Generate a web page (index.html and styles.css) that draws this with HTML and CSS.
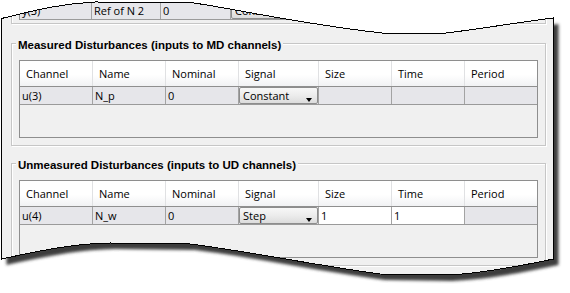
FILE: index.html
```html
<!DOCTYPE html>
<html lang="en">
<head>
    <meta charset="UTF-8">
    <meta name="viewport" content="width=device-width, initial-scale=1.0">
    <title>Disturbances</title>
    <link rel="stylesheet" href="styles.css">
</head>
<body>
    <div class="page">
        <svg class="shadow" width="570" height="293" viewBox="0 0 570 293">
            <defs>
                <filter id="soft" x="-5%" y="-5%" width="110%" height="110%">
                    <feGaussianBlur stdDeviation="1.6"/>
                </filter>
            </defs>
            <path transform="translate(5 6)" fill="#3c3c3c" filter="url(#soft)"
                  d="M1.5,18.5 C25,13 55,4 95,2 L190,2.5 C220,6 300,24 382,33 L446,33 C480,29 520,22 553.5,18 L553.5,259 C520,266 480,274 447,275 L380,274 C320,266 240,250 190,244 L110,243 C70,243.5 30,253 1.5,259 Z"/>
        </svg>

        <div class="sheet">
            <!-- tail of the reference signals table, cut by the tear -->
            <div class="group group-top">
                <div class="grid grid-top">
                    <div class="grid-row">
                        <div class="cell">y(3)</div>
                        <div class="cell">Ref of N 2</div>
                        <div class="cell">0</div>
                        <div class="cell combo-cell"><div class="combo"><span>Constant</span><span class="arrow"></span></div></div>
                        <div class="cell"></div>
                        <div class="cell"></div>
                        <div class="cell"></div>
                    </div>
                </div>
            </div>

            <div class="group group-md">
                <div class="group-title">Measured Disturbances (inputs to MD channels)</div>
                <div class="grid">
                    <div class="grid-head">
                        <div class="head-cell">Channel</div>
                        <div class="head-cell">Name</div>
                        <div class="head-cell">Nominal</div>
                        <div class="head-cell">Signal</div>
                        <div class="head-cell">Size</div>
                        <div class="head-cell">Time</div>
                        <div class="head-cell">Period</div>
                    </div>
                    <div class="grid-row">
                        <div class="cell">u(3)</div>
                        <div class="cell">N_p</div>
                        <div class="cell">0</div>
                        <div class="cell combo-cell"><div class="combo"><span>Constant</span><span class="arrow"></span></div></div>
                        <div class="cell"></div>
                        <div class="cell"></div>
                        <div class="cell"></div>
                    </div>
                    <div class="grid-empty"></div>
                </div>
            </div>

            <div class="group group-ud">
                <div class="group-title">Unmeasured Disturbances (inputs to UD channels)</div>
                <div class="grid">
                    <div class="grid-head">
                        <div class="head-cell">Channel</div>
                        <div class="head-cell">Name</div>
                        <div class="head-cell">Nominal</div>
                        <div class="head-cell">Signal</div>
                        <div class="head-cell">Size</div>
                        <div class="head-cell">Time</div>
                        <div class="head-cell">Period</div>
                    </div>
                    <div class="grid-row">
                        <div class="cell">u(4)</div>
                        <div class="cell">N_w</div>
                        <div class="cell">0</div>
                        <div class="cell combo-cell"><div class="combo"><span>Step</span><span class="arrow"></span></div></div>
                        <div class="cell edit">1</div>
                        <div class="cell edit">1</div>
                        <div class="cell"></div>
                    </div>
                    <div class="grid-empty"></div>
                </div>
            </div>
        </div>

        <svg class="edge" width="570" height="293" viewBox="0 0 570 293">
            <path fill="none" stroke="#000" stroke-width="1" shape-rendering="crispEdges"
                  d="M1.5,18.5 C25,13 55,4 95,2 L190,2.5 C220,6 300,24 382,33 L446,33 C480,29 520,22 553.5,18 L553.5,259 C520,266 480,274 447,275 L380,274 C320,266 240,250 190,244 L110,243 C70,243.5 30,253 1.5,259 Z"/>
        </svg>
    </div>
</body>
</html>
```

FILE: styles.css
```css
body {
    margin: 0;
    background: #fff;
    font-family: "Open Sans", "Liberation Sans", Arial, sans-serif;
    font-size: 11px;
    color: #000;
}
.page {
    position: relative;
    width: 570px;
    height: 293px;
    overflow: hidden;
}
.shadow,
.edge {
    position: absolute;
    top: 0;
    left: 0;
}
.shadow {
    z-index: 0;
}
.edge {
    z-index: 2;
}
.sheet {
    position: relative;
    z-index: 1;
    width: 570px;
    height: 293px;
    box-sizing: border-box;
    padding-left: 11px;
    background: #f0f0f0;
    clip-path: path('M1.5,18.5 C25,13 55,4 95,2 L190,2.5 C220,6 300,24 382,33 L446,33 C480,29 520,22 553.5,18 L553.5,259 C520,266 480,274 447,275 L380,274 C320,266 240,250 190,244 L110,243 C70,243.5 30,253 1.5,259 Z');
}

/* etched group boxes */
.group {
    width: 535px;
    box-sizing: border-box;
    border: 1px solid #c6c6c6;
    box-shadow: 1px 1px 0 #fff, inset 1px 1px 0 #fff;
    padding: 0 0 7px 7px;
}
.group-top {
    border-top: none;
    padding: 1px 0 3px 7px;
}
.group-md {
    margin-top: 19px;
}
.group-ud {
    margin-top: 17px;
}
.group-title {
    width: fit-content;
    margin: -6px 0 8px -3px;
    padding: 0 2px;
    background: #f0f0f0;
    font-family: "Liberation Sans", Arial, sans-serif;
    font-size: 11.5px;
    font-weight: bold;
    line-height: 14px;
    white-space: nowrap;
}

/* tables */
.grid {
    width: 519px;
    box-sizing: border-box;
    border: 1px solid #8e8e8e;
    background: #f0f0f0;
}
.grid-top {
    border-top: none;
    border-bottom: none;
}
.grid-head,
.grid-row {
    display: grid;
    grid-template-columns: 73px 73px 73px 80px 73px 73px 72px;
}
.grid-top .grid-row {
    grid-template-columns: 72px 69px 70px 80px 75px 75px 76px;
}
.grid-head {
    height: 25px;
}
.head-cell {
    border-right: 1px solid #e0e1e3;
    background: linear-gradient(#fff, #fff 55%, #f1f2f4);
    padding-left: 6px;
    line-height: 25px;
    white-space: nowrap;
}
.grid-row {
    border-top: 1px solid #8f8f8f;
    border-bottom: 1px solid #9a9a9a;
}
.cell {
    height: 17px;
    background: #e6e6ea;
    border-right: 1px solid #a3a3a3;
    padding-left: 2px;
    line-height: 17px;
    white-space: nowrap;
    overflow: hidden;
}
.cell.edit {
    background: #fff;
}
.head-cell:last-child,
.cell:last-child {
    border-right: none;
}
.grid-empty {
    height: 32px;
}

/* combo box */
.combo-cell {
    padding-left: 0;
}
.combo {
    height: 17px;
    box-sizing: border-box;
    display: flex;
    justify-content: space-between;
    padding: 0 5px 0 3px;
    border: 1px solid #8d8d8d;
    border-radius: 2px;
    background: linear-gradient(#f7f7f7, #ececec 50%, #dcdcdc);
    line-height: 15px;
}
.arrow {
    align-self: flex-end;
    margin-bottom: 1px;
    border-top: 4px solid #000;
    border-left: 3px solid transparent;
    border-right: 3px solid transparent;
}
```
